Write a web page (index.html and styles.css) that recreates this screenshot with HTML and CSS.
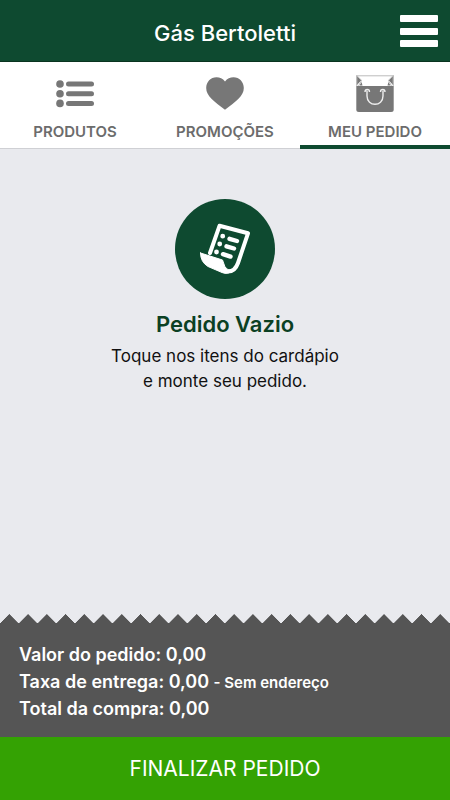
FILE: index.html
```html
<!DOCTYPE html>
<html lang="pt-BR">
<head>
  <meta charset="UTF-8">
  <meta name="viewport" content="width=device-width, initial-scale=1.0">
  <title>Gás Bertoletti</title>
  <link rel="stylesheet" href="styles.css">
</head>
<body>
  <header class="topbar">
    <h1>Gás Bertoletti</h1>
    <button class="menu-btn" type="button" aria-label="Menu">
      <svg width="38" height="32" viewBox="0 0 38 32" fill="#fff">
        <rect width="38" height="7" rx="1"/>
        <rect y="13" width="38" height="7" rx="1"/>
        <rect y="25" width="38" height="7" rx="1"/>
      </svg>
    </button>
  </header>

  <nav class="tabs">
    <a class="tab" href="#produtos">
      <svg width="38" height="38" viewBox="0 0 38 38" fill="#777">
        <circle cx="4" cy="9" r="3.8"/>
        <circle cx="4" cy="18.7" r="3.8"/>
        <circle cx="4" cy="28.4" r="3.8"/>
        <rect x="10" y="6.5" width="28" height="5" rx="2.5"/>
        <rect x="10" y="16.2" width="28" height="5" rx="2.5"/>
        <rect x="10" y="25.9" width="28" height="5" rx="2.5"/>
      </svg>
      <span>PRODUTOS</span>
    </a>
    <a class="tab" href="#promocoes">
      <svg width="38" height="38" viewBox="0 0 38 38" fill="#777">
        <path d="M19 6.500C16.800 3.700 13.800 2.300 10.500 2.300C4.700 2.300.2 7 .2 13C.2 21 8 26.500 19 34.800C30 26.500 37.800 21 37.800 13C37.800 7 33.300 2.300 27.500 2.300C24.200 2.300 21.200 3.700 19 6.500Z"/>
      </svg>
      <span>PROMOÇÕES</span>
    </a>
    <a class="tab active" href="#pedido">
      <svg width="38" height="38" viewBox="0 0 38 38">
        <path d="M.3 11H37.700V34.500Q37.700 37 35.200 37H2.800Q.3 37 .3 34.500Z" fill="#777"/>
        <path d="M.5 0L5.500 5L.5 10.500ZM37.500 0L32.500 5L37.500 10.500ZM3.500 10.500L5.500 7L6.500 10.500ZM34.500 10.500L32.500 7L31.500 10.500Z" fill="#777"/>
        <path d="M.8 11V.8H37.200V11M1 1L5.500 5.500L2.500 11M37 1L32.500 5.500L35.500 11" fill="none" stroke="#bbb" stroke-width="1"/>
        <path d="M9 17C9 13.500 13.500 13.500 13.500 17M24.500 17C24.500 13.500 29 13.500 29 17M11 15.500V21C11 32 27 32 27 21V15.500" fill="none" stroke="#eee" stroke-width="1.400"/>
      </svg>
      <span>MEU PEDIDO</span>
    </a>
  </nav>

  <main class="empty">
    <div class="empty-icon">
      <svg width="100" height="100" viewBox="0 0 100 100" fill="none" stroke="#fff" stroke-linecap="round" stroke-linejoin="round">
        <path d="M35 54L44.500 26.800L73 34.300L63 64Q60 72.500 53 72.500" stroke-width="4"/>
        <path d="M25.500 54L47.500 61L50 68Q52.500 71.500 57 71.500Q53 76 47 73.500L33 67.500Q25.500 63 25.500 54Z" fill="#fff" stroke-width="1"/>
        <path d="M54.500 39.800L62 42M51.500 47.300L59 49.500M48 55.200L55.500 57.600" stroke-width="4.400"/>
        <path d="M47.700 37.200H47.710M44.700 45H44.710M41.500 53H41.510" stroke-width="4.800"/>
      </svg>
    </div>
    <h2>Pedido Vazio</h2>
    <p>Toque nos itens do cardápio<br>e monte seu pedido.</p>
  </main>

  <footer>
    <div class="zigzag"></div>
    <div class="summary">
      <p>Valor do pedido: 0,00</p>
      <p>Taxa de entrega: 0,00 <small>- Sem endereço</small></p>
      <p>Total da compra: 0,00</p>
    </div>
    <button class="finish-btn" type="button">FINALIZAR PEDIDO</button>
  </footer>
</body>
</html>
```
FILE: styles.css
```css
* {
  box-sizing: border-box;
}

body {
  margin: 0;
  min-height: 100vh;
  display: flex;
  flex-direction: column;
  background: #e9eaee;
  font-family: "Inter", sans-serif;
}

h1,
h2,
p {
  margin: 0;
}

svg {
  display: block;
}

.topbar {
  display: grid;
  grid-template-columns: 1fr auto 1fr;
  align-items: center;
  height: 62px;
  padding: 0 12px;
  background: #0e4a30;
  border-bottom: 1px solid #0a3420;
}

.topbar h1 {
  grid-column: 2;
  padding-top: 4px;
  color: #fff;
  font-size: 22px;
  font-weight: 500;
  line-height: 28px;
}

.menu-btn {
  justify-self: end;
  padding: 0;
  border: 0;
  background: none;
  cursor: pointer;
}

.tabs {
  display: flex;
  background: #fff;
  border-bottom: 1px solid #cfd0d4;
}

.tab {
  flex: 1;
  display: flex;
  flex-direction: column;
  align-items: center;
  gap: 11px;
  padding: 13px 0 5px;
  margin-bottom: -1px;
  border-bottom: 4px solid transparent;
  color: #6c6c6c;
  font-size: 15px;
  font-weight: 600;
  line-height: 16px;
  text-decoration: none;
}

.tab.active {
  border-color: #0e4a30;
}

.empty {
  flex: 1;
  display: flex;
  flex-direction: column;
  align-items: center;
  padding: 50px 20px;
  text-align: center;
}

.empty-icon {
  border-radius: 50%;
  background: #0e4a30;
}

.empty h2 {
  margin: 10px 0 5px;
  color: #0b4023;
  font-size: 22px;
  font-weight: 600;
  line-height: 30px;
}

.empty p {
  color: #111;
  font-size: 17px;
  line-height: 25px;
}

/* torn paper edge, 24 teeth across */
.zigzag {
  height: 9px;
  background: conic-gradient(from 134deg at 50% 0, #555 92deg, transparent 0);
  background-size: calc(100% / 24) 100%;
}

.summary {
  padding: 18px 19px 15px;
  background: #555;
  color: #fff;
  font-size: 18px;
  font-weight: 600;
  line-height: 27px;
}

.summary p {
  height: 27px;
}

.summary small {
  font-size: 15px;
}

.finish-btn {
  display: block;
  width: 100%;
  height: 63px;
  padding: 0;
  border: 0;
  background: #34a203;
  color: #fff;
  font-family: inherit;
  font-size: 21px;
  cursor: pointer;
}
```
